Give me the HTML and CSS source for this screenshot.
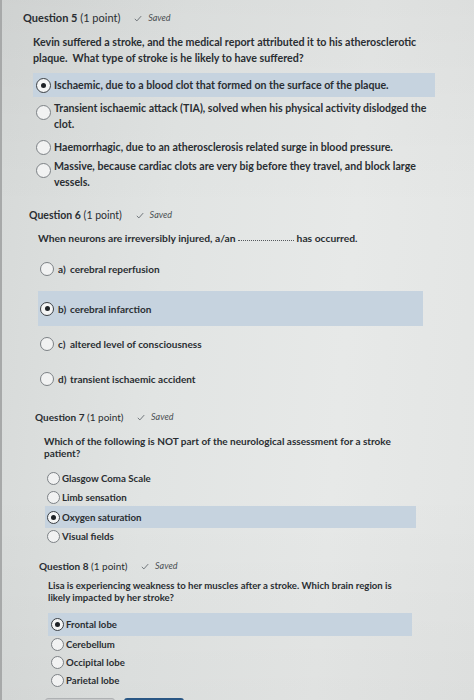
FILE: index.html
```html
<!DOCTYPE html>
<html lang="en">
<head>
<meta charset="utf-8">
<title>Quiz</title>
<link rel="stylesheet" href="styles.css">
</head>
<body>
<div class="page">

  <section class="question q5">
    <div class="q-head"><b>Question 5</b> (1 point) <span class="saved"><svg class="check" viewBox="0 0 10 8"><path d="M1 4.5 L3.6 7 L9 1"/></svg>Saved</span></div>
    <p class="q-text">Kevin suffered a stroke, and the medical report attributed it to his atherosclerotic plaque.&nbsp; What type of stroke is he likely to have suffered?</p>
    <div class="opts">
      <div class="opt sel o1"><span class="radio on"></span><span class="lbl">Ischaemic, due to a blood clot that formed on the surface of the plaque.</span></div>
      <div class="opt o2 multi"><span class="radio"></span><span class="lbl">Transient ischaemic attack (TIA), solved when his physical activity dislodged the clot.</span></div>
      <div class="opt o3"><span class="radio"></span><span class="lbl">Haemorrhagic, due to an atherosclerosis related surge in blood pressure.</span></div>
      <div class="opt o4 multi"><span class="radio"></span><span class="lbl">Massive, because cardiac clots are very big before they travel, and block large vessels.</span></div>
    </div>
  </section>

  <section class="question q6">
    <div class="q-head"><b>Question 6</b> (1 point) <span class="saved"><svg class="check" viewBox="0 0 10 8"><path d="M1 4.5 L3.6 7 L9 1"/></svg>Saved</span></div>
    <p class="q-text">When neurons are irreversibly injured, a/an <span class="blank"></span> has occurred.</p>
    <div class="opts">
      <div class="opt oa"><span class="radio"></span><span class="letter">a)</span><span class="lbl">cerebral reperfusion</span></div>
      <div class="opt sel"><span class="radio on"></span><span class="letter">b)</span><span class="lbl">cerebral infarction</span></div>
      <div class="opt"><span class="radio"></span><span class="letter">c)</span><span class="lbl">altered level of consciousness</span></div>
      <div class="opt"><span class="radio"></span><span class="letter">d)</span><span class="lbl">transient ischaemic accident</span></div>
    </div>
  </section>

  <section class="question q7">
    <div class="q-head"><b>Question 7</b> (1 point) <span class="saved"><svg class="check" viewBox="0 0 10 8"><path d="M1 4.5 L3.6 7 L9 1"/></svg>Saved</span></div>
    <p class="q-text">Which of the following is NOT part of the neurological assessment for a stroke patient?</p>
    <div class="opts">
      <div class="opt"><span class="radio"></span><span class="lbl">Glasgow Coma Scale</span></div>
      <div class="opt"><span class="radio"></span><span class="lbl">Limb sensation</span></div>
      <div class="opt sel"><span class="radio on"></span><span class="lbl">Oxygen saturation</span></div>
      <div class="opt last"><span class="radio"></span><span class="lbl">Visual fields</span></div>
    </div>
  </section>

  <section class="question q8">
    <div class="q-head"><b>Question 8</b> (1 point) <span class="saved"><svg class="check" viewBox="0 0 10 8"><path d="M1 4.5 L3.6 7 L9 1"/></svg>Saved</span></div>
    <p class="q-text">Lisa is experiencing weakness to her muscles after a stroke. Which brain region is likely impacted by her stroke?</p>
    <div class="opts">
      <div class="opt sel"><span class="radio on"></span><span class="lbl">Frontal lobe</span></div>
      <div class="opt"><span class="radio"></span><span class="lbl">Cerebellum</span></div>
      <div class="opt"><span class="radio"></span><span class="lbl">Occipital lobe</span></div>
      <div class="opt"><span class="radio"></span><span class="lbl">Parietal lobe</span></div>
    </div>
    <div class="buttons">
      <button class="btn btn-grey" aria-label="Previous"></button>
      <button class="btn btn-blue" aria-label="Next"></button>
    </div>
  </section>

</div>
</body>
</html>
```

FILE: styles.css
```css
* { box-sizing: border-box; }

html, body {
  margin: 0;
  padding: 0;
  height: 700px;
  overflow: hidden;
}

body {
  font-family: Lato, "Open Sans", sans-serif;
  color: #2a2e32;
  background:
    linear-gradient(180deg, rgba(0,0,0,0.035) 0%, rgba(0,0,0,0) 30%, rgba(0,0,0,0) 70%, rgba(0,0,0,0.03) 100%),
    linear-gradient(95deg, #d6d9d8 0%, #e1e4e3 35%, #e7e9e8 70%, #e3e5e4 100%);
}

.page {
  min-height: 700px;
  border-left: 2px solid #a7a9a9;
  padding-top: 11px;
}

.question p { margin: 0; }

.q-head {
  display: flex;
  align-items: center;
  font-weight: 400;
  line-height: 14px;
  white-space: pre;
}

.q-head b { font-weight: 700; }

.saved {
  display: inline-flex;
  align-items: center;
  margin-left: 11px;
  font-style: italic;
  color: #4a4f53;
  font-size: 9px;
}

.check {
  width: 8px;
  height: 7px;
  margin-right: 6px;
  fill: none;
  stroke: #6a7075;
  stroke-width: 1.2;
}

.q-text { font-weight: 700; }

.opts { display: flex; flex-direction: column; }

.opt {
  display: flex;
  align-items: center;
  font-weight: 700;
  padding-left: 3px;
}

.opt.multi { align-items: flex-start; }
.opt.multi .radio { margin-top: 5px; }

.opt.sel { background: #c6d3df; }

.radio {
  flex: none;
  width: 14px;
  height: 14px;
  border-radius: 50%;
  border: 1px solid #7c8185;
  background: #f1f2f2;
  margin-right: 3px;
  position: relative;
}

.radio.on {
  border: 1.5px solid #3a3f44;
  background: #f4f5f5;
}

.radio.on::after {
  content: "";
  position: absolute;
  left: 50%;
  top: 50%;
  width: 5px;
  height: 5px;
  margin: -2.5px 0 0 -2.5px;
  border-radius: 50%;
  background: #1e2226;
}

.blank {
  display: inline-block;
  width: 56px;
  height: 1px;
  border-bottom: 1.5px dotted #55595d;
  vertical-align: 1px;
}

/* Question 5 */
.q5 { margin-left: 21px; width: 412px; }
.q5 .q-head { font-size: 11px; }
.q5 .q-text { margin: 9px 0 0 10px; font-size: 10.7px; line-height: 16px; }
.q5 .opts { margin: 7px 0 0 10px; }
.q5 .opt { font-size: 10.6px; line-height: 16px; }
.q5 .opt .radio { width: 15px; height: 15px; }
.q5 .o1 { height: 24px; margin-bottom: 3px; }
.q5 .o2 { margin-bottom: 7px; }
.q5 .o3 { margin-bottom: 3px; }

/* Question 6 */
.q6 { margin: 18px 0 0 27px; width: 394px; }
.q6 .q-head { font-size: 10.5px; }
.q6 .q-text { margin: 8px 0 0 9px; font-size: 10.3px; line-height: 16px; }
.q6 .opts { margin: 5px 0 0 9px; }
.q6 .opt { height: 35px; font-size: 10px; padding-left: 2px; }
.q6 .oa { margin-bottom: 5px; }
.q6 .radio { width: 14px; height: 14px; margin-right: 4px; }
.q6 .letter { width: 12px; }

/* Question 7 */
.q7 { margin: 14px 0 0 33px; width: 381px; }
.q7 .q-head { font-size: 10px; }
.q7 .q-text { margin: 11px 0 0 9px; font-size: 10px; line-height: 12px; }
.q7 .opts { margin: 10px 0 0 10px; gap: 1px; }
.q7 .opt { height: 18px; font-size: 9.7px; padding-left: 2px; }
.q7 .opt.sel { height: 22px; margin-top: -1px; }
.q7 .opt.last { height: 16px; margin-top: -1px; }
.q7 .radio { width: 13px; height: 13px; margin-right: 2px; }

/* Question 8 */
.q8 { margin: 15px 0 0 37px; width: 373px; }
.q8 .q-head { font-size: 10px; }
.q8 .q-text { margin: 7px 0 0 9px; font-size: 9.6px; line-height: 12px; }
.q8 .opts { margin: 9px 0 0 9px; gap: 2px; }
.q8 .opt { height: 16px; font-size: 9.6px; padding-left: 3px; }
.q8 .opt.sel { height: 23px; margin-bottom: -2px; }
.q8 .radio { width: 13px; height: 13px; margin-right: 2px; }

.buttons {
  display: flex;
  gap: 9px;
  margin: 10px 0 0 6px;
}

.btn {
  height: 28px;
  border-radius: 3px;
  padding: 0;
}

.btn-grey {
  width: 70px;
  background: #c8cacb;
  border: 1px solid #aeb1b3;
}

.btn-blue {
  width: 60px;
  background: #3f77ad;
  border: 1px solid #244f7c;
  border-top: 2px solid #2a5785;
}
```
